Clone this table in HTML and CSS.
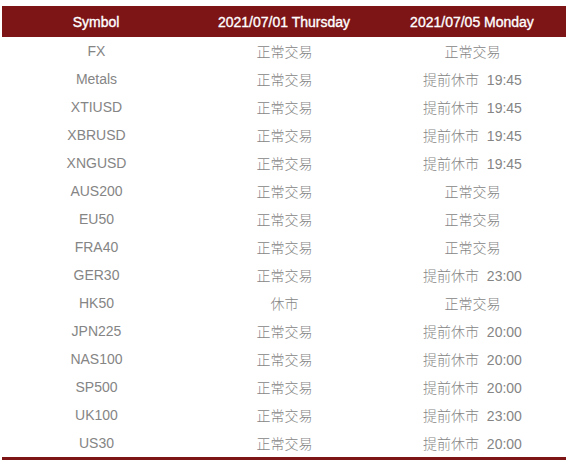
FILE: index.html
```html
<!DOCTYPE html>
<html lang="zh">
<head>
<meta charset="utf-8">
<title>Trading hours</title>
<link rel="stylesheet" href="styles.css">
</head>
<body>
<table class="hours">
  <thead>
    <tr><th>Symbol</th><th>2021/07/01 Thursday</th><th>2021/07/05 Monday</th></tr>
  </thead>
  <tbody>
    <tr><td>FX</td><td>正常交易</td><td>正常交易</td></tr>
    <tr><td>Metals</td><td>正常交易</td><td>提前休市&nbsp; 19:45</td></tr>
    <tr><td>XTIUSD</td><td>正常交易</td><td>提前休市&nbsp; 19:45</td></tr>
    <tr><td>XBRUSD</td><td>正常交易</td><td>提前休市&nbsp; 19:45</td></tr>
    <tr><td>XNGUSD</td><td>正常交易</td><td>提前休市&nbsp; 19:45</td></tr>
    <tr><td>AUS200</td><td>正常交易</td><td>正常交易</td></tr>
    <tr><td>EU50</td><td>正常交易</td><td>正常交易</td></tr>
    <tr><td>FRA40</td><td>正常交易</td><td>正常交易</td></tr>
    <tr><td>GER30</td><td>正常交易</td><td>提前休市&nbsp; 23:00</td></tr>
    <tr><td>HK50</td><td>休市</td><td>正常交易</td></tr>
    <tr><td>JPN225</td><td>正常交易</td><td>提前休市&nbsp; 20:00</td></tr>
    <tr><td>NAS100</td><td>正常交易</td><td>提前休市&nbsp; 20:00</td></tr>
    <tr><td>SP500</td><td>正常交易</td><td>提前休市&nbsp; 20:00</td></tr>
    <tr><td>UK100</td><td>正常交易</td><td>提前休市&nbsp; 23:00</td></tr>
    <tr><td>US30</td><td>正常交易</td><td>提前休市&nbsp; 20:00</td></tr>
  </tbody>
</table>
</body>
</html>
```
FILE: styles.css
```css
html, body {
  margin: 0;
  padding: 0;
  background: #ffffff;
}
body {
  padding: 6px 0 0 2px;
  font-family: "Liberation Sans", Arial, "Noto Sans CJK SC", sans-serif;
  font-size: 14px;
}
.hours {
  width: 564px;
  border-collapse: collapse;
  table-layout: fixed;
  border-bottom: 3px solid #7d1517;
}
.hours th {
  height: 31px;
  padding: 0;
  background: #7d1517;
  color: #ffffff;
  font-weight: normal;
  -webkit-text-stroke: 0.35px #ffffff;
  text-align: center;
  vertical-align: middle;
}
.hours td {
  height: 28px;
  padding: 0 0 0 1px;
  color: #858585;
  font-weight: 300;
  text-align: center;
  vertical-align: middle;
}
```
